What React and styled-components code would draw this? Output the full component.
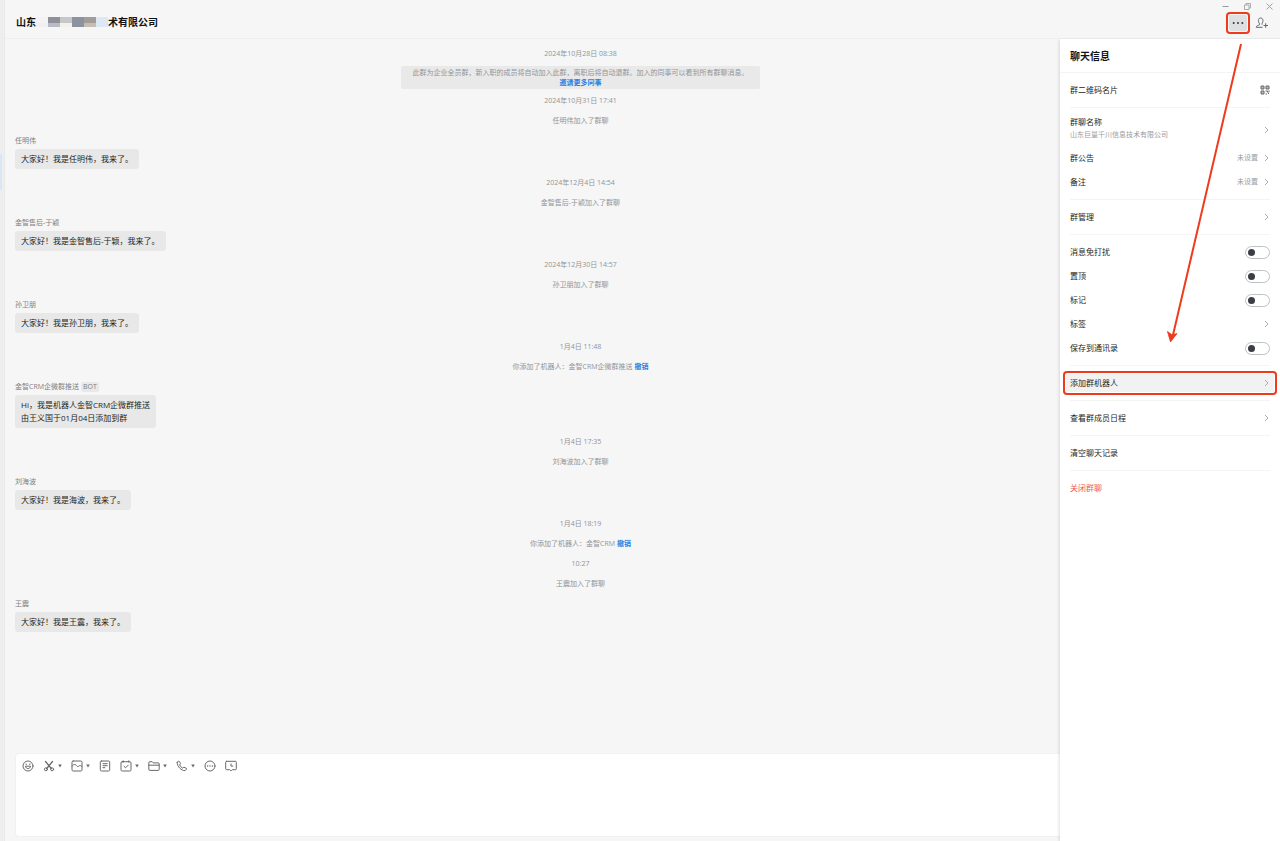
import React from "react";
import styled, { createGlobalStyle } from "styled-components";

const GlobalStyle = createGlobalStyle`
  *, *::before, *::after { box-sizing: border-box; }
  body {
    margin: 0;
    background: #f6f6f6;
    color: #1c1e20;
    font-family: "Open Sans", "Noto Sans CJK SC", sans-serif;
    font-size: 8px;
    line-height: 12px;
  }
  button, input, textarea { font: inherit; color: inherit; }
  button { padding: 0; border: 0; background: none; cursor: pointer; }
  h1, h2, p { margin: 0; padding: 0; }
  svg { display: block; fill: none; stroke: currentColor; }
`;

const Window = styled.div`
  position: relative;
  display: flex;
  min-height: 100vh;
`;

const SideStrip = styled.div`
  flex: none;
  width: 5px;
  padding-top: 154px;
  background: #eeeeee;
  border-right: 1px solid #e9e9e9;
`;

const SideSelection = styled.div`
  width: 2px;
  height: 36px;
  background: #d9e6f5;
`;

const Main = styled.div`
  flex: 1;
  min-width: 0;
  display: flex;
  flex-direction: column;
`;

const Header = styled.header`
  display: flex;
  justify-content: space-between;
  height: 39px;
  border-bottom: 1px solid #eeeeee;
`;

const Title = styled.h1`
  display: flex;
  align-items: center;
  padding: 6px 0 0 11px;
  color: #101214;
  font-size: 10px;
  line-height: 16px;
  font-weight: 700;
`;

const Mosaic = styled.span`
  display: flex;
  width: 72px;
  height: 10px;
`;

const Tile = styled.span`
  flex: 1;
  background: ${(p) => p.$tone};
`;

const HeaderTools = styled.div`
  display: flex;
  flex-direction: column;
  align-items: flex-end;
  padding-right: 6px;
`;

const WindowButtons = styled.div`
  display: flex;
  gap: 13px;
  padding-top: 1px;
  color: #9b9b9b;
`;

const ActionButtons = styled.div`
  display: flex;
  align-items: center;
  gap: 5px;
  padding-right: 5px;
  color: #66696d;
`;

const IconButton = styled.button`
  display: flex;
  align-items: center;
  justify-content: center;
`;

const MoreButton = styled(IconButton)`
  width: 24px;
  height: 22px;
  border: 2px solid #ee3a1d;
  border-radius: 4px;
  padding: 1px;
  color: #34373b;
`;

const MoreFace = styled.span`
  display: flex;
  align-items: center;
  justify-content: center;
  width: 18px;
  height: 16px;
  border-radius: 2px;
  background: #dedfe1;
`;

const Body = styled.div`
  flex: 1;
  display: flex;
`;

const Chat = styled.main`
  flex: 1;
  min-width: 0;
  display: flex;
  flex-direction: column;
  justify-content: space-between;
  gap: 20px;
`;

const Feed = styled.div`
  padding-top: 5px;
`;

const SystemLine = styled.p`
  padding-left: 96px;
  color: #929497;
  font-size: 7px;
  line-height: 20px;
  text-align: center;
`;

const Notice = styled.div`
  width: 359px;
  margin: 2px auto;
  padding: 2px 0 1px;
  border-radius: 2px;
  background: #e9e9ea;
  color: #929497;
  font-size: 7px;
  line-height: 10px;
  text-align: center;
`;

const NoticeRow = styled.div`
  padding-left: 96px;
`;

const Link = styled.a`
  color: #2b7de0;
  font-weight: 700;
  text-decoration: none;
`;

const Message = styled.article`
  display: flex;
  flex-direction: column;
  align-items: flex-start;
  gap: 2px;
  padding: 4px 0 4px 10px;
`;

const Sender = styled.div`
  display: flex;
  align-items: center;
  gap: 2px;
  color: #7d8083;
  font-size: 7px;
  line-height: 12px;
`;

const BotTag = styled.span`
  padding: 0 2px;
  border-radius: 2px;
  background: #e9e9ea;
  line-height: 10px;
`;

const Bubble = styled.p`
  padding: 3px 6px 4px;
  border-radius: 3px;
  background: #e8e8e8;
  color: #1c1e20;
  font-size: 8px;
  line-height: 13px;
  white-space: pre-line;
`;

const Composer = styled.section`
  display: flex;
  flex-direction: column;
  height: 84px;
  margin: 0 0 4px 10px;
  border: 1px solid #f1f1f1;
  border-right: 0;
  border-radius: 4px 0 0 4px;
  background: #fff;
`;

const Toolbar = styled.div`
  display: flex;
  align-items: center;
  gap: 9px;
  height: 24px;
  padding-left: 6px;
  color: #66696d;
`;

const Tool = styled(IconButton)`
  gap: 3px;
`;

const Editor = styled.textarea`
  flex: 1;
  padding: 0 7px;
  border: 0;
  outline: 0;
  resize: none;
  background: transparent;
`;

const Panel = styled.aside`
  flex: none;
  width: 220px;
  background: #fff;
  box-shadow: -1px 1px 3px rgba(0, 0, 0, 0.12);
`;

const PanelTitle = styled.h2`
  padding: 9px 10px 8px;
  border-bottom: 1px solid #f4f4f4;
  color: #101214;
  font-size: 10px;
  line-height: 16px;
  font-weight: 700;
`;

const Section = styled.section`
  margin: 0 10px;
  padding: 5px 0;
  border-bottom: ${(p) => (p.$last ? "0" : "1px solid #f4f4f4")};
`;

const rowLayout = `
  display: flex;
  align-items: center;
  justify-content: space-between;
  width: 100%;
  min-height: 24px;
  text-align: left;
`;

const Row = styled.button`
  ${rowLayout}
  color: ${(p) => (p.$danger ? "#ee5a52" : "#1c1e20")};
`;

const MarkedWrap = styled.div`
  display: flex;
  margin: 0 -7px;
`;

const MarkedRow = styled(Row)`
  padding: 0 5px;
  border: 2px solid #ee3a1d;
  border-radius: 4px;
  background: #f2f2f2;
  box-shadow: inset 0 0 0 1px #fff;
`;

const SwitchRow = styled.label`
  ${rowLayout}
`;

const TwoLine = styled.span`
  display: flex;
  flex-direction: column;
  padding: 2px 0 5px;
  line-height: 13px;
`;

const Hint = styled.span`
  color: #9a9c9f;
  font-size: 7px;
`;

const RowEnd = styled.span`
  display: flex;
  align-items: center;
  gap: 5px;
  color: #a2a4a7;
`;

const Switch = styled.input`
  appearance: none;
  display: flex;
  align-items: center;
  width: 25px;
  height: 13px;
  margin: 0;
  padding: 0 2px;
  border: 1px solid #bfc1c3;
  border-radius: 7px;
  background: #fff;
  &::before {
    content: "";
    width: 7px;
    height: 7px;
    border-radius: 50%;
    background: #3a3d42;
  }
  &:checked { justify-content: flex-end; }
`;

const Arrow = styled.svg`
  position: absolute;
  top: 40px;
  right: 30px;
  pointer-events: none;
`;

const Chevron = () => (
  <svg width="7" height="8" viewBox="0 0 7 8" strokeWidth="0.9"><path d="M2 1l3 3-3 3" /></svg>
);

const Caret = () => (
  <svg width="4" height="4" viewBox="0 0 4 4"><path d="M0.200 0.600h3.600L2 3.400z" fill="currentColor" stroke="none" /></svg>
);

const Glyph = ({ children }) => (
  <svg width="12" height="12" viewBox="0 0 12 12" strokeWidth="1" strokeLinecap="round" strokeLinejoin="round">{children}</svg>
);

const tools = [
  { label: "表情", art: <><circle cx="6" cy="6" r="5" /><path d="M3.5 6.600c.5 2.800 4.500 2.800 5 0z" /><path d="M4.200 4v.6M7.800 4v.6" /></> },
  { label: "截图", menu: true, art: <><path d="M2.500 1.500l5.800 7M9.500 1.500L3.700 8.500" strokeWidth="1.300" /><circle cx="2.900" cy="9.300" r="1.500" /><circle cx="9.100" cy="9.300" r="1.500" /></> },
  { label: "图片", menu: true, art: <><rect x="1" y="1" width="10" height="10" rx="1.200" /><path d="M1 6.200c1.800-2.600 3.500-2 4.500-.5 1 1.400 1.800.8 2.600.2s1.800-.4 2.900.6" /></> },
  { label: "文档", art: <><rect x="1.300" y="1" width="9.400" height="10" rx="1.200" /><path d="M4 3.700h4.200M4 5.700h4.200M4 7.700h1.800" /></> },
  { label: "待办", menu: true, art: <><rect x="1" y="1.700" width="10" height="9.300" rx="1.200" /><path d="M3.200 .8v1.400M8.800 .8v1.400M4 6.300l1.600 1.500 2.700-2.700" /></> },
  { label: "文件", menu: true, art: <><path d="M.8 2.700q0-1 1-1h2.400l1.200 1.200h4.800q1 0 1 1v5.500q0 1-1 1H1.800q-1 0-1-1zM.8 5.200h10.400" /></> },
  { label: "通话", menu: true, art: <><path d="M1.200 2.300l1.400-1 .9.300 1 2-.9 1.300c.6 1.500 1.600 2.500 3 3.200l1.300-.9 2.400 1.100.2.900-1.300 1.400C5.400 11 .9 6.500 1.200 2.300z" /></> },
  { label: "更多", art: <><circle cx="6" cy="6" r="5" /><path d="M3.600 6h.1M6 6h.1M8.400 6h.1" strokeWidth="1.300" /></> },
  { label: "会话记录", art: <><path d="M1.600 1.300h8.800q.9 0 .9.900v6.600q0 .9-.9.900H7.200L6 10.900 4.800 9.700H1.600q-.9 0-.9-.9V2.200q0-.9.900-.9z" /><path d="M6 3.900v2.200h1.800" /></> },
];

const feed = [
  { time: "2024年10月28日 08:38" },
  { notice: true },
  { time: "2024年10月31日 17:41" },
  { sys: "任明伟加入了群聊" },
  { from: "任明伟", text: "大家好！我是任明伟，我来了。" },
  { time: "2024年12月4日 14:54" },
  { sys: "金智售后-于颖加入了群聊" },
  { from: "金智售后-于颖", text: "大家好！我是金智售后-于颖，我来了。" },
  { time: "2024年12月30日 14:57" },
  { sys: "孙卫朋加入了群聊" },
  { from: "孙卫朋", text: "大家好！我是孙卫朋，我来了。" },
  { time: "1月4日 11:48" },
  { sys: "你添加了机器人：金智CRM企微群推送", undo: true },
  { from: "金智CRM企微群推送", bot: true, text: "Hi，我是机器人金智CRM企微群推送\n由王义国于01月04日添加到群" },
  { time: "1月4日 17:35" },
  { sys: "刘海波加入了群聊" },
  { from: "刘海波", text: "大家好！我是海波，我来了。" },
  { time: "1月4日 18:19" },
  { sys: "你添加了机器人：金智CRM", undo: true },
  { time: "10:27" },
  { sys: "王震加入了群聊" },
  { from: "王震", text: "大家好！我是王震，我来了。" },
];

const FeedItem = ({ item }) => {
  if (item.notice) {
    return (
      <NoticeRow>
        <Notice>
          此群为企业全员群，新入职的成员将自动加入此群，离职后将自动退群。加入的同事可以看到所有群聊消息。
          <br />
          <Link href="#invite">邀请更多同事</Link>
        </Notice>
      </NoticeRow>
    );
  }
  if (item.from) {
    return (
      <Message>
        <Sender>{item.from}{item.bot && <BotTag>BOT</BotTag>}</Sender>
        <Bubble>{item.text}</Bubble>
      </Message>
    );
  }
  return (
    <SystemLine>
      {item.time || item.sys}
      {item.undo && <> <Link href="#undo">撤销</Link></>}
    </SystemLine>
  );
};

const LinkRow = ({ label, value }) => (
  <Row type="button">
    {label}
    <RowEnd>{value && <Hint>{value}</Hint>}<Chevron /></RowEnd>
  </Row>
);

const ToggleRow = ({ label }) => (
  <SwitchRow>{label}<Switch type="checkbox" /></SwitchRow>
);

const tiles = [
  ["#f3f3f4", "#8e8f9b", "#c6c7ca", "#8b93a1", "#a39c9b", "#dce9f4"],
  ["#f0f0f1", "#b9bac4", "#f4f1ea", "#8b93a1", "#c5beb2", "#dce9f4"],
];

export default function App() {
  return (
    <>
      <GlobalStyle />
      <Window>
        <SideStrip><SideSelection /></SideStrip>
        <Main>
          <Header>
            <Title>
              山东
              <Mosaic>
                {tiles[0].map((tone, i) => (
                  <Tile key={i} $tone={`linear-gradient(${tone} 60%, ${tiles[1][i]} 60%)`} />
                ))}
              </Mosaic>
              术有限公司
            </Title>
            <HeaderTools>
              <WindowButtons>
                <IconButton aria-label="最小化"><svg width="9" height="11" viewBox="0 0 9 11"><path d="M1.500 5.500h6" /></svg></IconButton>
                <IconButton aria-label="还原"><svg width="9" height="11" viewBox="0 0 9 11" strokeWidth="0.8"><path d="M1.500 4h4.500v4.500H1.500zM3 4V2.500h4.500V7H6" /></svg></IconButton>
                <IconButton aria-label="关闭"><svg width="9" height="11" viewBox="0 0 9 11" strokeWidth="0.9"><path d="M1.500 2.500l6 6M7.500 2.500l-6 6" /></svg></IconButton>
              </WindowButtons>
              <ActionButtons>
                <MoreButton aria-label="聊天信息">
                  <MoreFace>
                    <svg width="12" height="4" viewBox="0 0 12 4"><g fill="currentColor" stroke="none"><circle cx="1.700" cy="2" r="1" /><circle cx="6" cy="2" r="1" /><circle cx="10.300" cy="2" r="1" /></g></svg>
                  </MoreFace>
                </MoreButton>
                <IconButton aria-label="添加成员">
                  <svg width="14" height="12" viewBox="0 0 14 12" strokeWidth="1"><path d="M7.500 10.300H1.200c0-1.700 2.600-2 3.300-2.600.4-.5 0-1-.3-1.500C2.700 3.500 3.500 1 5.700 1S8.700 3.500 7.200 6.200c-.3.500-.5 1-.1 1.500M8.500 8.500h4.500M10.700 6.200v4.600" /></svg>
                </IconButton>
              </ActionButtons>
            </HeaderTools>
          </Header>
          <Body>
            <Chat>
              <Feed>
                {feed.map((item, i) => <FeedItem key={i} item={item} />)}
              </Feed>
              <Composer>
                <Toolbar>
                  {tools.map((t) => (
                    <Tool key={t.label} type="button" aria-label={t.label}>
                      <Glyph>{t.art}</Glyph>
                      {t.menu && <Caret />}
                    </Tool>
                  ))}
                </Toolbar>
                <Editor aria-label="消息" />
              </Composer>
            </Chat>
            <Panel>
              <PanelTitle>聊天信息</PanelTitle>
              <Section>
                <Row type="button">
                  群二维码名片
                  <RowEnd>
                    <svg width="10" height="10" viewBox="0 0 10 10"><g stroke="#66696d" strokeWidth="1"><path d="M1 1h3v3H1zM6 1h3v3H6zM1 6h3v3H1z" fill="#b9bbbd" /><path d="M5.500 6h2v1.500M9 5.500v1.500M5.500 9h1.500M8.500 7.500v1.500" /></g></svg>
                  </RowEnd>
                </Row>
              </Section>
              <Section>
                <Row type="button">
                  <TwoLine>群聊名称<Hint>山东巨量千川信息技术有限公司</Hint></TwoLine>
                  <RowEnd><Chevron /></RowEnd>
                </Row>
                <LinkRow label="群公告" value="未设置" />
                <LinkRow label="备注" value="未设置" />
              </Section>
              <Section><LinkRow label="群管理" /></Section>
              <Section>
                <ToggleRow label="消息免打扰" />
                <ToggleRow label="置顶" />
                <ToggleRow label="标记" />
                <LinkRow label="标签" />
                <ToggleRow label="保存到通讯录" />
              </Section>
              <Section>
                <MarkedWrap>
                  <MarkedRow type="button">添加群机器人<RowEnd><Chevron /></RowEnd></MarkedRow>
                </MarkedWrap>
              </Section>
              <Section><LinkRow label="查看群成员日程" /></Section>
              <Section><Row type="button">清空聊天记录</Row></Section>
              <Section $last><Row type="button" $danger>关闭群聊</Row></Section>
            </Panel>
          </Body>
        </Main>
        <Arrow width="90" height="310" viewBox="0 0 90 310" aria-hidden="true">
          <path d="M81 4L13 295" stroke="#ee3a1d" strokeWidth="2" />
          <path d="M10.500 302L7.500 291.500l4.500 3.300 5-1.300z" fill="#ee3a1d" stroke="#ee3a1d" strokeWidth="0.8" />
        </Arrow>
      </Window>
    </>
  );
}
